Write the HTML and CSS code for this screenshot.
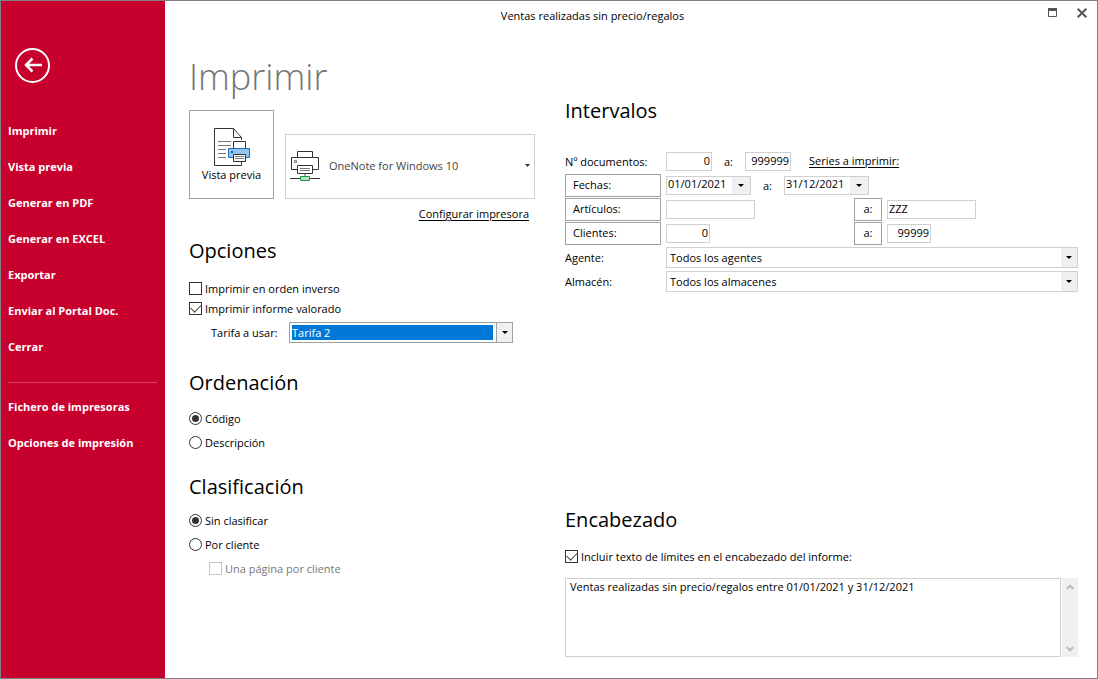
FILE: index.html
```html
<!DOCTYPE html>
<html lang="es">
<head>
<meta charset="utf-8">
<title>Ventas realizadas sin precio/regalos</title>
<link rel="stylesheet" href="styles.css">
</head>
<body>
<div class="window">
  <aside class="sidebar">
    <button class="back" type="button" aria-label="Volver">
      <svg width="35" height="35" viewBox="0 0 35 35" fill="none" stroke="#fff"><circle cx="17.5" cy="17.5" r="16.5" stroke-width="2"/><path d="M10 17H27M17.500 10.500L11 17l6.500 6.500" stroke-width="2.500"/></svg>
    </button>
    <nav class="nav">
      <button type="button">Imprimir</button>
      <button type="button">Vista previa</button>
      <button type="button">Generar en PDF</button>
      <button type="button">Generar en EXCEL</button>
      <button type="button">Exportar</button>
      <button type="button">Enviar al Portal Doc.</button>
      <button type="button">Cerrar</button>
      <hr class="separator">
      <button type="button">Fichero de impresoras</button>
      <button type="button">Opciones de impresión</button>
    </nav>
  </aside>

  <main class="main">
    <header class="titlebar">
      <div class="title">Ventas realizadas sin precio/regalos</div>
      <div class="window-buttons">
        <button type="button" aria-label="Maximizar"><svg width="9" height="9" viewBox="0 0 9 9"><path d="M.5.500h8v8h-8z" fill="none" stroke="#555"/><path d="M0 0h9v3H0z" fill="#555"/></svg></button>
        <button type="button" aria-label="Cerrar ventana"><svg width="10" height="10" viewBox="0 0 10 10"><path d="M.7.700l8.600 8.600M9.300.700L.7 9.300" stroke="#555" stroke-width="2"/></svg></button>
      </div>
    </header>

    <div class="content">
      <div class="column">
        <h1>Imprimir</h1>
        <div class="printer-row">
          <button class="preview" type="button">
            <svg width="36" height="40" viewBox="1 0 36 40" fill="none"><path d="M1.500 1.500h19l8 9V38.500h-27z" fill="#fff"/><path d="M28.500 13v-2.500l-8-9h-19v37h27V35" stroke="#333"/><path d="M20.500 1.500v9h8" stroke="#333"/><path d="M5 14.500h13M5 18.500h13M5 22.500h8M5 26.500h8M5 30.500h8" stroke="#777"/><path d="M20.500 14.500h12v7h-12z" fill="#fff" stroke="#333"/><path d="M15.500 21.500h21v9h-21z" fill="#93c6ee" stroke="#1a6fb8"/><path d="M18 24h2v2h-2z" fill="#1460a0"/><path d="M20.500 27.500h12v7h-12z" fill="#fff" stroke="#333"/><path d="M22 29.500h9M22 31.500h9" stroke="#777"/></svg>
            <span>Vista previa</span>
          </button>
          <button class="printer" type="button">
            <svg width="31" height="32" viewBox="0 0 31 32" fill="none"><path d="M7.500 7.500v-6h15v6M7 19.500H1.500v-12h27v12H23" stroke="#333"/><path d="M4.500 10.500h2v2h-2z" stroke="#777"/><path d="M7.500 15.500h15v8h-15z" fill="#fff" stroke="#333"/><path d="M10 18.500h10M10 20.500h10" stroke="#777"/><path d="M15 24v3" stroke="#aaa" stroke-width="2"/><path d="M0 28.500h30" stroke="#333"/><path d="M10.500 26.500h9v4h-9z" fill="#b9e0c0" stroke="#109a44"/></svg>
            <span class="printer-name">OneNote for Windows 10</span>
            <svg width="5" height="3" viewBox="0 0 5 3"><path d="M0 0h5L2.500 3z" fill="#333"/></svg>
          </button>
        </div>
        <a class="link configure" href="#">Configurar impresora</a>

        <section class="group options">
          <h2>Opciones</h2>
          <label class="check tight"><input type="checkbox">Imprimir en orden inverso</label>
          <label class="check tight"><input type="checkbox" checked>Imprimir informe valorado</label>
          <div class="rate">
            <label for="rate">Tarifa a usar:</label>
            <div class="combo focused">
              <select id="rate"><option>Tarifa 2</option></select>
              <span class="arrow"></span>
            </div>
          </div>
        </section>

        <section class="group order">
          <h2>Ordenación</h2>
          <label class="check"><input type="radio" name="order" checked>Código</label>
          <label class="check"><input type="radio" name="order">Descripción</label>
        </section>

        <section class="group classify">
          <h2>Clasificación</h2>
          <label class="check"><input type="radio" name="class" checked>Sin clasificar</label>
          <label class="check"><input type="radio" name="class">Por cliente</label>
          <label class="check nested"><input type="checkbox" disabled>Una página por cliente</label>
        </section>
      </div>

      <div class="column right">
        <section class="ranges">
          <h2>Intervalos</h2>
          <div class="row">
            <label for="doc-from">Nº documentos:</label>
            <div class="fields">
              <input class="field number" id="doc-from" value="0">
              <label class="to" for="doc-to">a:</label>
              <input class="field number" id="doc-to" value="999999">
              <a class="link series" href="#">Series a imprimir:</a>
            </div>
          </div>
          <div class="row">
            <button class="box" type="button">Fechas:</button>
            <div class="fields">
              <div class="date"><input aria-label="Fecha inicial" value="01/01/2021"><button class="arrow" type="button" aria-label="Abrir calendario inicial"></button></div>
              <label class="to" for="date-to">a:</label>
              <div class="date"><input id="date-to" value="31/12/2021"><button class="arrow" type="button" aria-label="Abrir calendario final"></button></div>
            </div>
          </div>
          <div class="row">
            <button class="box" type="button">Artículos:</button>
            <div class="pair">
              <input class="field text" aria-label="Artículo inicial">
              <button class="box center" type="button">a:</button>
              <input class="field text" aria-label="Artículo final" value="ZZZ">
            </div>
          </div>
          <div class="row">
            <button class="box" type="button">Clientes:</button>
            <div class="pair">
              <input class="field number client" aria-label="Cliente inicial" value="0">
              <button class="box center" type="button">a:</button>
              <input class="field number client" aria-label="Cliente final" value="99999">
            </div>
          </div>
          <div class="row">
            <label for="agent">Agente:</label>
            <div class="combo"><select id="agent"><option>Todos los agentes</option></select><span class="arrow"></span></div>
          </div>
          <div class="row">
            <label for="store">Almacén:</label>
            <div class="combo"><select id="store"><option>Todos los almacenes</option></select><span class="arrow"></span></div>
          </div>
        </section>

        <section class="heading">
          <h2>Encabezado</h2>
          <label class="check tight"><input type="checkbox" checked>Incluir texto de límites en el encabezado del informe:</label>
          <div class="memo">
            <textarea aria-label="Texto del encabezado">Ventas realizadas sin precio/regalos entre 01/01/2021 y 31/12/2021</textarea>
            <div class="scrollbar">
              <svg width="8" height="6" viewBox="0 0 8 6"><path d="M.7 5L4 1.700 7.300 5" fill="none" stroke="#bbb" stroke-width="2"/></svg>
              <svg width="8" height="6" viewBox="0 0 8 6"><path d="M.7 1L4 4.300 7.300 1" fill="none" stroke="#bbb" stroke-width="2"/></svg>
            </div>
          </div>
        </section>
      </div>
    </div>
  </main>
</div>
</body>
</html>
```
FILE: styles.css
```css
* { box-sizing: border-box; }
body {
  margin: 0;
  background: #fff;
  color: #000;
  font: 11px/16px "Open Sans", "Noto Sans", sans-serif;
}
button, input, select, textarea { font: inherit; color: inherit; margin: 0; }
button { background: none; border: 0; padding: 0; }

.window {
  display: grid;
  grid-template-columns: 164px 1fr;
  min-height: 100vh;
  border: 1px solid #808080;
}

/* Sidebar */
.sidebar { background: #c8002d; color: #fff; padding: 47px 8px 24px 7px; }
.back { display: block; margin-left: 7px; height: 35px; }
.back svg { display: block; }
.nav { display: flex; flex-direction: column; margin-top: 30px; }
.nav button { height: 36px; text-align: left; font-weight: 700; }
.separator { width: 100%; height: 1px; border: 0; margin: 17px 0 6px; background: #d8405f; }

/* Title bar */
.main { display: flex; flex-direction: column; min-width: 0; }
.titlebar { display: flex; height: 30px; }
.title { flex: 1; text-align: center; line-height: 30px; }
.window-buttons { display: flex; align-items: center; gap: 20px; width: 77px; padding: 0 10px 7px 26px; justify-content: flex-end; }
.window-buttons svg { display: block; }

.content {
  flex: 1;
  display: grid;
  grid-template-columns: 346px 1fr;
  gap: 30px;
  padding: 22px 19px 21px 24px;
}
.column { display: flex; flex-direction: column; }
h1 { margin: 0 0 9px; font-size: 36px; line-height: 48px; font-weight: 300; color: #757575; }
h2 { margin: 0; font-size: 20px; line-height: 30px; font-weight: 400; }

/* Printer */
.printer-row { display: flex; align-items: flex-end; gap: 11px; }
.preview {
  display: flex; flex-direction: column; align-items: center; justify-content: center;
  width: 85px; height: 89px; border: 1px solid #a0a0a0;
}
.printer { flex: 1; display: flex; align-items: center; height: 65px; padding: 0 4px 2px; border: 1px solid #d0d0d0; }
.printer-name { flex: 1; margin-left: 8px; text-align: left; color: #444; }
.link { color: #000; text-decoration: underline; text-underline-offset: 2px; }
.configure { align-self: flex-end; margin: 7px 6px 0 0; }

/* Option groups */
.options { margin-top: 14px; }
.order { margin-top: 25px; }
.classify { margin-top: 17px; }
.group h2 { margin-bottom: 9px; }
.group.options h2 { margin-bottom: 13px; }
.group.classify h2 { margin-bottom: 7px; }
.check { display: flex; align-items: center; gap: 3px; height: 24px; }
.check.tight { height: 20px; }
.check.nested { margin-left: 20px; color: #777; }
.check input {
  appearance: none; width: 13px; height: 13px; margin-bottom: 2px;
  border: 1px solid #333; background: #fff;
  display: grid; place-items: center;
}
.check input[type="radio"] { border-radius: 50%; }
.check input[type="radio"]:checked::after { content: ""; width: 7px; height: 7px; border-radius: 50%; background: #333; }
.check input[type="checkbox"]:checked::after {
  content: ""; width: 9px; height: 5px; margin-bottom: 3px;
  border: solid #444; border-width: 0 0 1px 1px; transform: rotate(-45deg);
}
.check input:disabled { border-color: #c4c4c4; }
.rate { display: grid; grid-template-columns: 78px 224px; align-items: center; margin: 3px 0 0 22px; }

/* Combos and fields */
.combo { position: relative; }
.combo select {
  appearance: none; display: block; width: 100%; height: 21px; padding: 0 18px 0 3px;
  border: 1px solid #d0d0d0; border-radius: 0; background: #fff; line-height: 19px;
}
.combo .arrow { position: absolute; top: 1px; right: 1px; bottom: 1px; width: 16px; pointer-events: none; }
.combo.focused select {
  padding: 2px 19px 2px 2px; border-color: #a0a0a0; color: #fff;
  background: #0078d7 content-box; line-height: 15px;
}
.combo.focused .arrow { border-left: 1px solid #a0a0a0; }
.arrow { display: grid; place-items: center; background: #f0f0f0; }
.arrow::after { content: ""; border: 3px solid transparent; border-top-color: #000; border-bottom: 0; }

.row { display: grid; grid-template-columns: 96px 1fr; gap: 5px; align-items: center; height: 24px; }
.row label { padding-top: 2px; }
.fields { display: flex; align-items: center; }
.pair { display: grid; grid-template-columns: 183px 28px 1fr; gap: 5px; align-items: center; }
.box { height: 23px; padding: 0 7px; border: 1px solid #a0a0a0; text-align: left; }
.box.center { padding: 0; text-align: center; }
.field { height: 19px; padding: 0 1px 2px; border: 1px solid #d0d0d0; }
.number { width: 46px; text-align: right; }
.number.client { width: 44px; }
.text { width: 89px; }
.to { margin: 0 12px; }
.series { margin-left: 18px; }
.date { display: flex; width: 85px; height: 19px; border: 1px solid #d0d0d0; }
.date input { flex: 1; min-width: 0; border: 0; padding: 0 1px 2px; background: none; }
.date .arrow { width: 18px; }

.right { padding-top: 43px; }
.ranges h2 { margin-bottom: 23px; }
.heading { margin-top: auto; }
.heading h2 { margin-bottom: 12px; }
.memo { display: flex; gap: 1px; margin-top: 11px; }
.memo textarea {
  flex: 1; display: block; height: 79px; padding: 0 4px; resize: none;
  border: 1px solid #d0d0d0; border-radius: 0; overflow: hidden;
}
.scrollbar {
  display: flex; flex-direction: column; justify-content: space-between; align-items: center;
  width: 16px; padding: 6px 0 5px; background: #f0f0f0;
}
```
